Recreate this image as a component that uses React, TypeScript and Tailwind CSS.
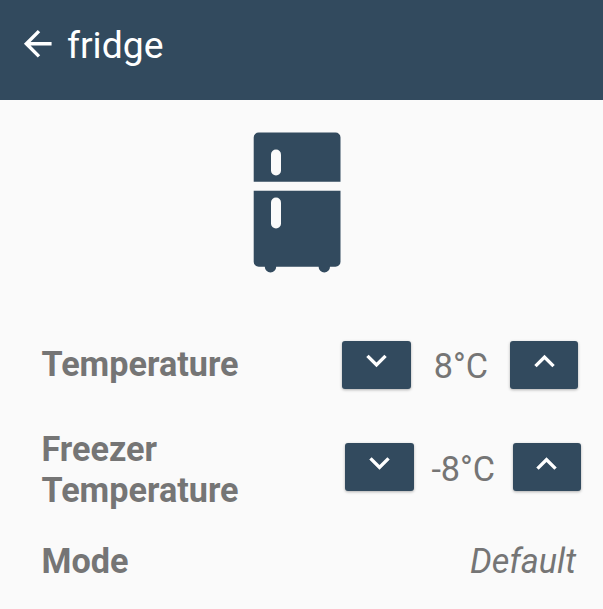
import React from "react";

const DOWN = "M7.41 8.59 12 13.17l4.59-4.58L18 10l-6 6-6-6z";
const UP = "M7.41 15.41 12 10.83l4.59 4.58L18 14l-6-6-6 6z";

function StepButton({ up = false, label }: { up?: boolean; label: string }) {
  return (
    <button
      aria-label={label}
      className="flex h-12 w-[68.5px] shrink-0 justify-center rounded-[3px] bg-[#324a5e] shadow-[0_1px_3px_rgba(0,0,0,0.3)]"
    >
      <svg viewBox="0 0 24 24" className={up ? "h-[41px] w-[41px] shrink-0" : "-mt-[1.5px] h-[41px] w-[41px] shrink-0"} fill="#fff">
        <path d={up ? UP : DOWN} />
      </svg>
    </button>
  );
}

function Stepper({ value, name, className }: { value: string; name: string; className: string }) {
  return (
    <div className={`flex ${className}`}>
      <StepButton label={`Decrease ${name}`} />
      <span className="mt-[5px] flex-1 text-center leading-10">{value}</span>
      <StepButton up label={`Increase ${name}`} />
    </div>
  );
}

function FridgeIcon() {
  return (
    <svg viewBox="0 0 88 142" className="h-[142px] w-[88px]" fill="#324a5e">
      <path d="M.7 49.700V5.500a5 5 0 0 1 5-5h76.800a5 5 0 0 1 5 5V49.700Z" />
      <path d="M.7 58.700h86.800v71a5 5 0 0 1-5 5H77a5.700 5.700 0 0 1-11.400 0H23.200a5.700 5.700 0 0 1-11.400 0H5.700a5 5 0 0 1-5-5Z" />
      <rect x="18" y="17.500" width="10" height="26" rx="5" fill="#fafafa" />
      <rect x="18" y="65.500" width="10" height="31" rx="5" fill="#fafafa" />
    </svg>
  );
}

export default function App() {
  return (
    <div className="h-[609px] w-[603px] overflow-hidden bg-[#fafafa] font-[Roboto,sans-serif] text-[34.2px] text-[#757575] antialiased">
      <header className="flex h-[100px] bg-[#324a5e] pl-[17px] text-white">
        <svg viewBox="0 0 24 24" className="mt-[23px] h-[41.5px] w-[41.5px]" fill="#fff">
          <path d="M20 11H7.830l5.590-5.590L12 4l-8 8 8 8 1.410-1.410L7.830 13H20v-2z" />
        </svg>
        <h1 className="mt-[23px] ml-[8.5px] text-[37.3px] leading-[44px]">fridge</h1>
      </header>
      <main>
        <div className="flex h-[241px] pt-8 pl-[253px]">
          <FridgeIcon />
        </div>
        <section className="flex h-[102px] justify-between pr-[24.6px] pl-[41.5px]">
          <h2 className="mt-[3px] leading-10 font-bold">Temperature</h2>
          <Stepper value="8°C" name="temperature" className="w-[236px] [&>span]:pl-[1px]" />
        </section>
        <section className="flex h-[98px] justify-between pr-[22px] pl-[41.5px]">
          <h2 className="-mt-[14px] w-[220px] leading-[40.5px] font-bold">Freezer Temperature</h2>
          <Stepper value="-8°C" name="freezer temperature" className="w-[236px] [&>span]:mt-[6px] [&>span]:pl-[0.5px] [&_svg]:translate-y-[0.5px]" />
        </section>
        <section className="flex justify-between pr-[27px] pl-[41.5px] leading-10">
          <h2 className="font-bold">Mode</h2>
          <span className="italic">Default</span>
        </section>
      </main>
    </div>
  );
}
